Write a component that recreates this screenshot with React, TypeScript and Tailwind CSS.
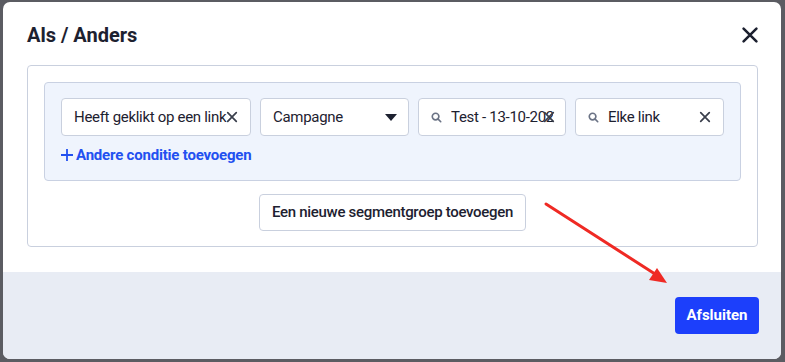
import { useState } from 'react'

const font = { fontFamily: 'Roboto, "Liberation Sans", sans-serif' }

function XIcon({ className = '' }: { className?: string }) {
  return (
    <svg viewBox="0 0 14 14" className={className} fill="none" stroke="currentColor" strokeWidth="2" strokeLinecap="round">
      <path d="M2 2l10 10M12 2L2 12" />
    </svg>
  )
}

function SearchIcon() {
  return (
    <svg viewBox="0 0 12 12" className="w-[11px] h-[11px] shrink-0 text-[#6b7385]" fill="none" stroke="currentColor" strokeWidth="1.8" strokeLinecap="round">
      <circle cx="5" cy="5" r="3.6" />
      <path d="M7.8 7.8l2.8 2.8" />
    </svg>
  )
}

export default function App() {
  const [groups] = useState(1)

  return (
    <div className="w-[785px] h-[362px] bg-[#5b5c62] pt-[2px] pl-[3px]" style={font}>
      <div className="relative w-[778px] h-[357px] bg-white rounded-[7px] overflow-hidden flex flex-col">
        {/* Header */}
        <div className="flex items-center justify-between pl-6 pr-[22px] pt-[21px] h-[44px]">
          <h2 className="text-[20px] leading-6 font-bold text-[#1d2130]">Als / Anders</h2>
          <button className="text-[#1d2130]">
            <XIcon className="w-[18px] h-[18px]" />
          </button>
        </div>

        {/* Body */}
        <div className="pl-6 pr-[23px] pt-[19px]">
          <div className="border border-[#c9d0de] rounded-[4px] px-4 pt-4 pb-[15px] flex flex-col items-center">
            {Array.from({ length: groups }).map((_, i) => (
              <div key={i} className="w-full bg-[#eff4fd] border border-[#c9d1e2] rounded-[4px] px-4 pt-[15px] h-[99px]">
                <div className="flex gap-[9px] text-[15px] tracking-[-0.3px] text-[#1d2130]">
                  <div className="w-[190px] h-[38px] bg-white border border-[#c9d0de] rounded-[4px] flex items-center pl-3 pr-3">
                    <span className="whitespace-nowrap">Heeft geklikt op een link</span>
                    <XIcon className="w-[12px] h-[12px] ml-auto shrink-0 text-[#3a3f4c]" />
                  </div>
                  <div className="w-[149px] h-[38px] bg-white border border-[#c9d0de] rounded-[4px] flex items-center pl-3 pr-[11px]">
                    <span>Campagne</span>
                    <svg viewBox="0 0 12 7" className="w-[12px] h-[7px] ml-auto text-[#1d2130]" fill="currentColor">
                      <path d="M0 0h12L6 7z" />
                    </svg>
                  </div>
                  <div className="relative w-[148px] h-[38px] bg-white border border-[#c9d0de] rounded-[4px] flex items-center pl-3 pr-[10px] gap-[9px]">
                    <SearchIcon />
                    <span className="whitespace-nowrap overflow-hidden w-[102px]">Test - 13-10-2022</span>
                    <XIcon className="absolute right-[10px] top-[12px] w-[12px] h-[12px] text-[#3a3f4c]" />
                  </div>
                  <div className="w-[149px] h-[38px] bg-white border border-[#c9d0de] rounded-[4px] flex items-center pl-3 pr-3 gap-[9px]">
                    <SearchIcon />
                    <span>Elke link</span>
                    <XIcon className="w-[12px] h-[12px] ml-auto text-[#3a3f4c]" />
                  </div>
                </div>
                <button className="mt-[9px] flex items-center gap-[3px] text-[#2250f0] text-[15px] tracking-[-0.2px] font-bold leading-5">
                  <svg viewBox="0 0 12 12" className="w-[12px] h-[12px]" fill="none" stroke="currentColor" strokeWidth="1.8">
                    <path d="M6 0v12M0 6h12" />
                  </svg>
                  Andere conditie toevoegen
                </button>
              </div>
            ))}
            <button className="mt-[13px] h-[37px] px-3 bg-white border border-[#c9d0de] rounded-[4px] text-[15px] tracking-[-0.3px] font-medium text-[#1d2130] whitespace-nowrap">
              Een nieuwe segmentgroep toevoegen
            </button>
          </div>
        </div>

        {/* Footer */}
        <div className="mt-auto h-[87px] bg-[#e8ecf4] flex items-center justify-end pr-[22px]">
          <button className="h-[37px] w-[84px] bg-[#1c3ffb] rounded-[4px] text-white text-[15px] font-bold">
            Afsluiten
          </button>
        </div>

        {/* Annotation arrow */}
        <svg className="absolute inset-0 pointer-events-none" width="778" height="357" viewBox="0 0 778 357">
          <line x1="543" y1="202" x2="652" y2="272" stroke="#ef2a24" strokeWidth="3" strokeLinecap="round" />
          <path d="M664 281 L646 278 L654 266 Z" fill="#ef2a24" />
        </svg>
      </div>
    </div>
  )
}
